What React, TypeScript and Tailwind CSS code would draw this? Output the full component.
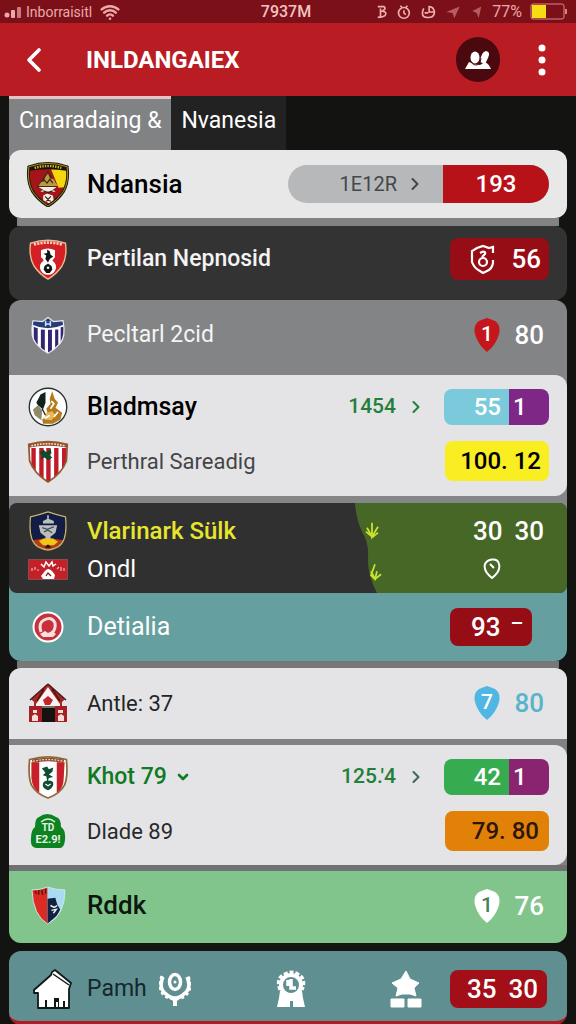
import type { ReactNode } from 'react';
import { ChevronDown, ChevronLeft, ChevronRight, Wifi } from 'lucide-react';

const SHIELD = 'M4 6Q24 -1 44 6Q46 22 40 32Q34 41 24 47Q14 41 8 32Q2 22 4 6Z';

function LionCrest() {
  return (
    <svg viewBox="0 0 48 48" className="h-[46px] w-[46px]" aria-hidden="true">
      <clipPath id="lion">
        <path d={SHIELD} />
      </clipPath>
      <g clipPath="url(#lion)">
        <path d="M0 0h48v48H0z" fill="#a5141a" />
        <path d="M27 8h20v19l-12 1z" fill="#f6d60f" />
        <path d="M24 10L12 28H34Z" fill="#4b2a14" />
        <path d="M0 0h48v11Q24 6 0 11z" fill="#17140c" />
      </g>
      <path d="M10 7Q24 3 38 7" fill="none" stroke="#d8b428" strokeWidth="3" strokeDasharray="1.500 1.200" />
      <path d="M24 13l2 5 4 1 2 4 3 3H14l3-4 3-1 1-4z" fill="#b99a45" />
      <path d="M20 20l3 3 3-4 3 4" fill="none" stroke="#3c1a12" strokeWidth="1.2" />
      <path d="M14 27h19l-4 3 3 2H16l3-2zM19 36l4-2 6 2 1 5-5 3-6-3z" fill="#f3ece2" />
      <path d="M19 31l5 2 5-2M21 37l3 3 3-3M22 42l2-1 3 1" fill="none" stroke="#3c1a12" strokeWidth="1.2" />
      <path d={SHIELD} fill="none" stroke="#1c1a0c" strokeWidth="3" />
      <path d={SHIELD} fill="none" stroke="#b08f22" strokeWidth="1" />
    </svg>
  );
}

function KnotCrest() {
  return (
    <svg viewBox="0 0 48 48" className="h-[42px] w-[42px]" aria-hidden="true">
      <path d={SHIELD} fill="#d41f24" stroke="#e9b98d" strokeWidth="1.6" />
      <path d="M8 7.500Q24 3 40 7.500" fill="none" stroke="#f4cfc7" strokeWidth="3" strokeDasharray="2.500 1.200" />
      <path d="M16 14q8-4 16 0v8q-3 3-3 4 5 3 4 9-2 7-9 7t-9-7q-1-6 4-9 0-2-3-4z" fill="#fff" />
      <path d="M23 13l3 2 1 4 3 2-4 3-2 4-3-4 1-4-3-2 4-1zM20 32l4-3 4 3 1 4-3 4h-4l-3-4z" fill="#141414" />
      <circle cx="24" cy="34" r="1.500" fill="#fff" />
    </svg>
  );
}

function StripedCrest() {
  return (
    <svg viewBox="0 0 48 48" className="h-[38px] w-[38px]" aria-hidden="true">
      <clipPath id="blue">
        <path d="M5 6l12 1 7-5 7 5 12-1q4 20-4 29-7 8-15 12-8-4-15-12Q1 26 5 6z" />
      </clipPath>
      <g clipPath="url(#blue)">
        <path d="M0 0h48v48H0z" fill="#fff" />
        <path d="M6 14h5v34H6zM15 17h5v31h-5zM24 17h5v31h-5zM33 17h4v31h-4zM40 14h4v34h-4z" fill="#322672" />
        <path d="M0 0h48v12Q24 20 0 12z" fill="#263b78" />
        <path d="M4 12Q24 21 44 12" fill="none" stroke="#fff" strokeWidth="2" />
        <path d="M21 6v7M27 6v7M21 10h6" stroke="#cfe0ff" strokeWidth="2" />
      </g>
      <path d="M5 6l12 1 7-5 7 5 12-1q4 20-4 29-7 8-15 12-8-4-15-12Q1 26 5 6z" fill="none" stroke="#e8eaf5" strokeWidth="1.500" />
    </svg>
  );
}

function KnightCrest() {
  return (
    <svg viewBox="0 0 48 48" className="h-10 w-10" aria-hidden="true">
      <circle cx="24" cy="24" r="22.500" fill="#fff" stroke="#26332e" strokeWidth="1.600" />
      <path d="M10 19l5-10 6-3v13l-3 8-6-5z" fill="#10241d" />
      <path d="M6 27l6-5 5 6-1 12-8-6z" fill="#8f8b6a" />
      <path d="M29 5l3 9 4 5-3 6 8 6-2 8-9 5H18l-1-5 7-5-2-8 5-6-1-6z" fill="#b57a1c" />
      <path d="M22 31l7-2 4 5-5 6-8-1z" fill="#e7b95a" />
      <path d="M28 17l3 3-4 6M36 30l-5 6M20 38l6-4" fill="none" stroke="#fff" strokeWidth="2" />
      <path d="M17 26l4 8" stroke="#10241d" strokeWidth="1.500" />
    </svg>
  );
}

function RedStripesCrest() {
  return (
    <svg viewBox="0 0 48 50" className="h-[44px] w-[42px]" aria-hidden="true">
      <clipPath id="stripes">
        <path d="M2 6Q24 0 46 6L45 25Q40 39 24 49Q8 39 3 25Z" />
      </clipPath>
      <g clipPath="url(#stripes)">
        <path d="M0 0h48v50H0z" fill="#fff" />
        <path d="M5 10h5v40H5zM14 10h5v40h-5zM22 10h5v40h-5zM31 10h5v40h-5zM40 10h5v40h-5z" fill="#c11a28" />
        <path d="M0 0h48v10Q24 5 0 10z" fill="#a34a33" />
      </g>
      <path d="M5 7.500Q24 2.500 43 7.500" fill="none" stroke="#efd9b8" strokeWidth="2.500" strokeDasharray="2 1.300" />
      <path d="M14 15l5-3 3 3 5-4 1 5-3 2 4 3-5 3-4-3-4 2 1-4z" fill="#0e4a2b" />
      <path d="M2 6Q24 0 46 6L45 25Q40 39 24 49Q8 39 3 25Z" fill="none" stroke="#8d5a32" strokeWidth="2" />
    </svg>
  );
}

function TrophyCrest() {
  return (
    <svg viewBox="0 0 48 48" className="h-10 w-10" aria-hidden="true">
      <clipPath id="trophy">
        <path d="M24 1Q36 5 45 7Q48 36 36 43Q30 46 24 47Q18 46 12 43Q0 36 3 7Q12 5 24 1Z" />
      </clipPath>
      <g clipPath="url(#trophy)">
        <path d="M0 0h48v48H0z" fill="#131c45" />
        <path d="M0 36l24-4 24 4v12H0z" fill="#b23a1c" />
      </g>
      <path d="M23 5h2v6h-2zM18 12l6-3 7 3v3H18zM13 17h22l-2 9-6 5v3h-6v-3l-6-5z" fill="#b7bfc0" />
      <path d="M17 20l6 2 8-3M19 25l5-2 5 3" fill="none" stroke="#45504f" strokeWidth="1.500" />
      <path d="M13 36l6-3h11l6 4-5 4H18z" fill="#f2c614" />
      <path d="M20 44l4-4 4 4" fill="#1c120c" />
      <path d="M24 1Q36 5 45 7Q48 36 36 43Q30 46 24 47Q18 46 12 43Q0 36 3 7Q12 5 24 1Z" fill="none" stroke="#c6b46a" strokeWidth="1.500" />
    </svg>
  );
}

function BannerCrest() {
  return (
    <svg viewBox="0 0 40 21" className="h-[21px] w-10" aria-hidden="true">
      <path d="M.5.500h39v20H.5z" fill="#c3202a" stroke="#8c4c4a" />
      <path d="M4 9v3M7 8v3M9 11h2M29 10l2-2M33 8v4M36 9v3" stroke="#f2b7b2" strokeWidth="1.200" />
      <path d="M13 5l3 3 2-5 3 4 3-4 1 4 3-2" fill="none" stroke="#fff" strokeWidth="1.500" />
      <path d="M17 12q3-4 7 0l3 4-1 4H15l-2-3z" fill="#fff" />
      <path d="M18 17l2-3 3 3" fill="none" stroke="#7a1016" strokeWidth="1.200" />
    </svg>
  );
}

function RoundCrest() {
  return (
    <svg viewBox="0 0 32 32" className="h-8 w-8" aria-hidden="true">
      <circle cx="16" cy="16" r="14.500" fill="#c8303b" stroke="#fff" strokeWidth="2" />
      <path d="M9 21q-3-9 3-12 8-4 11 3 1 6-3 10" fill="none" stroke="#f7dfe0" strokeWidth="3" />
      <path d="M16 11q4 0 3 4l-2 3v3h-3v-3q-3-6 2-7z" fill="#c8303b" />
      <path d="M8 23l5-3 3 2 4-2 4 3-3 3H11z" fill="#f7dfe0" />
    </svg>
  );
}

function StadiumCrest() {
  return (
    <svg viewBox="0 0 40 40" className="h-10 w-10" aria-hidden="true">
      <path d="M20 1L37 16l-3 3v6H6v-6l-3-3z" fill="#a8262a" />
      <path d="M20 1L2 17M16 6L9 18M24 6l8 12M20 1l18 16" stroke="#4d1717" strokeWidth="1.500" />
      <path d="M20 4l12 17v6H8v-6z" fill="#f8f3f0" />
      <path d="M15 17l5-4 5 4-3 5h-5z" fill="#c2242b" />
      <path d="M1 23h13v16H1zM27 23h12v16H27z" fill="#a32025" />
      <path d="M5 27h4v3H5zM4 33l3-2 3 2v5H4zM30 27h5v3h-5zM30 33l3-2 3 2v5h-6z" fill="#f7dcd8" />
      <path d="M14 24h13v15H14z" fill="#16120f" />
      <path d="M14 24h13" stroke="#6b716b" strokeWidth="2" />
    </svg>
  );
}

function LeafCrest() {
  return (
    <svg viewBox="0 0 48 50" className="h-[44px] w-[42px]" aria-hidden="true">
      <path d="M3 5Q24-1 45 5Q47 24 43 34Q38 44 24 49Q10 44 5 34Q1 24 3 5Z" fill="#fff" stroke="#8f6a36" strokeWidth="2" />
      <path d="M5 8h9v35Q6 38 5 26zM34 8h9l-1 18q0 12-8 17z" fill="#c8202b" />
      <path d="M6 7Q24 3 42 7" fill="none" stroke="#8d4b36" strokeWidth="4" />
      <path d="M7 7Q24 3 41 7" fill="none" stroke="#ead2ac" strokeWidth="1.500" strokeDasharray="2 1.500" />
      <path d="M17 15l6-2 2 3 5-2-1 5-4 3 5 3-5 1-1 3q7 0 6 5-2 5-6 6-6-2-6-6 0-4 5-5l-1-5-4-1 3-3z" fill="#0f4d35" />
      <path d="M21 33l3 2 3-2" fill="none" stroke="#fff" strokeWidth="1.300" />
    </svg>
  );
}

function GreenBadge() {
  return (
    <svg viewBox="0 0 36 36" className="h-9 w-9" aria-hidden="true">
      <path d="M9 4q8-6 17 0 5 1 5 10 5 3 4 13-1 8-5 8H6q-6-1-5-10 0-8 4-11 0-9 4-10z" fill="#0d8221" />
      <path d="M11 9q7-6 14 0" fill="none" stroke="#d9f3da" strokeWidth="1.500" />
      <text x="18" y="18" textAnchor="middle" fontSize="10" fontWeight="700" fill="#e6f7e6">TD</text>
      <text x="18" y="30" textAnchor="middle" fontSize="11" fontWeight="700" fill="#e6f7e6">E2.9!</text>
    </svg>
  );
}

function HalfCrest() {
  return (
    <svg viewBox="0 0 36 40" className="h-[39px] w-[35px]" aria-hidden="true">
      <path d="M1 4Q10 4 17 1v38Q2 30 1 4z" fill="#dc2a25" />
      <path d="M17 1q8 3 18 3 0 26-18 35z" fill="#a9dcf2" />
      <path d="M17 13l8-1 2 7 3 5-3 6-10 9z" fill="#14213f" />
      <path d="M20 20l4 2 3-2M21 25l5-1-3 4" fill="none" stroke="#e9f2fa" strokeWidth="1.500" />
      <path d="M4 5l2 3M8 4v5M11 4l1 5M15 3v5" stroke="#5d1512" strokeWidth="1.500" />
      <path d="M1 4Q10 4 17 1q8 3 18 3 0 26-18 35Q2 30 1 4z" fill="none" stroke="#cfe6e6" />
    </svg>
  );
}

function HouseIcon() {
  return (
    <svg viewBox="0 0 40 40" className="h-10 w-10" aria-hidden="true">
      <path d="M18 6L1 21v3h4v15h31V20l2-6L22 1l-3 2z" fill="#fff" stroke="#10191a" strokeWidth="1.800" strokeLinejoin="round" />
      <path d="M20 5l16 11" stroke="#10191a" strokeWidth="1.500" />
      <path d="M12 31h2v8h-2zM21 29h5v9h-5zM30 32h2v7h-2z" fill="#10191a" />
      <path d="M23 33h2v5h-2z" fill="#fff" />
    </svg>
  );
}

function WreathIcon() {
  return (
    <svg viewBox="0 0 32 36" className="h-9 w-8" fill="none" stroke="#fff" aria-hidden="true">
      <path d="M4 6Q-1 17 7 23Q11 27 16 27Q21 27 25 23Q33 17 28 6" strokeWidth="3.500" />
      <path d="M3 5Q-2 18 6 25Q16 31 26 25Q34 18 29 5" strokeWidth="3" strokeDasharray="3 2.500" />
      <ellipse cx="16" cy="11" rx="5.500" ry="7.500" strokeWidth="3.500" />
      <circle cx="16" cy="11" r="1.500" fill="#fff" stroke="none" />
      <path d="M11 26l3 4v5h4v-5l3-4z" fill="#fff" stroke="none" />
    </svg>
  );
}

function MedalIcon() {
  return (
    <svg viewBox="0 0 30 38" className="h-[38px] w-[30px]" fill="none" stroke="#fff" aria-hidden="true">
      <path d="M4 20Q-1 8 9 4Q15 0 22 4Q31 9 26 20" strokeWidth="3" strokeDasharray="4 2" />
      <circle cx="15" cy="15" r="10" strokeWidth="4" />
      <path d="M15 9v9h5M12 10v6" strokeWidth="3.500" />
      <path d="M4 21h5l6 4 6-4h5l1 7 2 9H17v-6h-3v6H1l2-9z" fill="#fff" stroke="none" />
    </svg>
  );
}

function PodiumIcon() {
  return (
    <svg viewBox="0 0 32 38" className="h-[38px] w-8" fill="#fff" stroke="#fff" strokeLinejoin="round" aria-hidden="true">
      <path d="M16 1l4 8 9 4-5 5 2 8-6-2h-8l-6 2 2-8-6-5 9-4z" />
      <path d="M1 29h13v8H1zM18 29h13v8H18z" />
    </svg>
  );
}

function Pin({ value, fill, ink }: { value: string; fill: string; ink: string }) {
  return (
    <svg viewBox="0 0 26 36" className="h-9 w-[26px]" role="img" aria-label={value}>
      <path d="M13 1Q16 2 21 4Q27 8 25 17Q22 28 13 35Q4 28 1 17Q-1 8 5 4Q10 2 13 1Z" fill={fill} />
      <text x="13" y="24" textAnchor="middle" fontSize="21" fontWeight="500" fill={ink}>{value}</text>
    </svg>
  );
}

type RowProps = { logo: ReactNode; name: ReactNode; tone: string; children?: ReactNode };

function Row({ logo, name, tone, children }: RowProps) {
  return (
    <div className="flex items-center gap-4 pr-[18px] pl-4">
      <span className="grid w-[46px] shrink-0 place-items-center">{logo}</span>
      <span className={`flex flex-1 items-center gap-2 whitespace-nowrap ${tone}`}>{name}</span>
      {children}
    </div>
  );
}

function Meta({ children, chevron }: { children: ReactNode; chevron: string }) {
  return (
    <button className="flex items-center gap-[10px] pr-[2px] text-[21px] font-medium text-[#23803a]">
      {children}
      <ChevronRight className={`h-5 w-5 ${chevron}`} strokeWidth={2.5} />
    </button>
  );
}

function Split({ left, right, leftTone, rightTone }: { left: string; right: string; leftTone: string; rightTone: string }) {
  return (
    <span className="flex h-9 w-[105px] overflow-hidden rounded-lg text-2xl leading-9 font-medium text-white">
      <span className={`flex-1 pr-2 text-right ${leftTone}`}>{left}</span>
      <span className={`w-10 pl-1 ${rightTone}`}>{right}</span>
    </span>
  );
}

const score = 'text-[26px] leading-9 font-medium';

function StatusBar() {
  return (
    <div className="grid h-[23px] grid-cols-[1fr_auto_1fr] items-center bg-[#7b1018] pr-2 pl-1 text-base leading-5 text-[#eba9aa]">
      <div className="flex items-center">
        <svg viewBox="0 0 18 12" className="mr-1 h-3 w-[18px]" fill="currentColor" aria-hidden="true">
          <circle cx="3" cy="9" r="2.500" />
          <rect x="7" y="4" width="4" height="8" rx="1" />
          <rect x="13" y="1" width="4" height="11" rx="1" opacity=".7" />
        </svg>
        <span className="text-sm">Inborraisitl</span>
        <Wifi className="ml-2 h-5 w-5" strokeWidth={3} />
      </div>
      <span className="font-medium text-[#f3c3c3]">7937M</span>
      <div className="flex items-center justify-end gap-2">
        <svg viewBox="0 0 120 18" className="h-[18px] w-[108px]" fill="none" stroke="#f0b2b1" strokeWidth="1.800" aria-hidden="true">
          <path d="M2 3h7q3 2-2 5 6 1 3 5-3 2-8 2M5 5v10" />
          <circle cx="31" cy="10" r="6" />
          <path d="M31 7v3l2 2M27 2l2 2M35 2l-2 2" />
          <path d="M53 5q-4 9 3 10 9 1 9-6-1-6-6-6v6h5M54 10h4" />
          <path d="M78 9l15-6-6 13-2-6zM107 8l10-5-3 13-2-6z" fill="#b85b5f" stroke="none" />
        </svg>
        <span>77%</span>
        <svg viewBox="0 0 38 17" className="h-[17px] w-[38px]" aria-hidden="true">
          <rect x="1" y="1" width="33" height="15" rx="2" fill="none" stroke="#d48a84" />
          <rect x="2" y="2" width="14" height="13" fill="#f5dc15" />
          <path d="M36 6v5" stroke="#d48a84" strokeWidth="2" />
        </svg>
      </div>
    </div>
  );
}

function Header() {
  return (
    <header className="flex items-center bg-[#b91c23] py-[14px] pr-4 pl-3 text-white">
      <button aria-label="Back" className="grid h-11 w-11 place-items-center">
        <ChevronLeft className="h-11 w-10" strokeWidth={2.2} />
      </button>
      <h1 className="ml-[30px] flex-1 text-2xl leading-8 font-bold">INLDANGAIEX</h1>
      <button aria-label="Friends" className="grid h-[45px] w-[44px] place-items-center rounded-full bg-[#4a090e]">
        <svg viewBox="0 0 26 20" className="h-5 w-[26px]" fill="#fff" aria-hidden="true">
          <path d="M0 19l4-7 5 2 6 1 5-3q4 2 6 7z" />
          <ellipse cx="10" cy="7.500" rx="4.500" ry="6" />
          <path d="M15 12q1-10 6-11 5 1 2 7l-3 6z" />
          <path d="M5 11q5 7 10 2l1-5" fill="none" stroke="#4a090e" />
        </svg>
      </button>
      <button aria-label="More" className="ml-6 grid h-11 w-9 place-items-center">
        <svg viewBox="0 0 8 32" className="h-8 w-2" fill="#fff" aria-hidden="true">
          <circle cx="4" cy="4" r="3.500" />
          <circle cx="4" cy="16" r="3.500" />
          <circle cx="4" cy="28" r="3.500" />
        </svg>
      </button>
    </header>
  );
}

export default function App() {
  return (
    <div className="min-h-screen bg-[#131312] font-[Roboto,'Liberation_Sans',sans-serif]">
      <StatusBar />
      <Header />

      <main className="px-[9px]">
        <nav className="-mb-2 flex text-[23px] leading-8 text-white">
          <button className="border-t-[3px] border-[#e4c4c4] bg-[#808284] px-[10px] pt-[6px] pb-[21px] whitespace-nowrap">Cınaradaing &amp;</button>
          <button className="bg-[#222222] px-[10px] pt-[9px] pb-[21px]">Nvanesia</button>
        </nav>

        <section className="relative rounded-xl bg-[#e8e8e9] py-[11px]">
          <Row logo={<LionCrest />} name="Ndansia" tone="text-[26px] font-medium text-black">
            <div className="flex h-[38px] w-[261px] items-center rounded-full bg-[#b7b8ba]">
              <button className="flex flex-1 items-center justify-end gap-2 pr-[18px] text-xl text-[#45474a]">
                1E12R
                <ChevronRight className="h-5 w-5" strokeWidth={2.5} />
              </button>
              <span className="h-full w-[106px] rounded-l-lg rounded-r-full bg-[#b81219] text-center text-2xl leading-[38px] font-medium text-white">193</span>
            </div>
          </Row>
        </section>
        <div className="mx-2 h-2 bg-[#828385]" />

        <section className="rounded-xl bg-[#343334] pt-3 pb-5">
          <Row logo={<KnotCrest />} name="Pertilan Nepnosid" tone="text-[23px] font-medium text-[#f4f4f4]">
            <span className={`flex h-[42px] w-[99px] items-center justify-between rounded-lg bg-[#970d16] pr-2 pl-5 text-white ${score}`}>
              <svg viewBox="0 0 26 30" className="h-[30px] w-[26px]" fill="none" stroke="#fff" strokeWidth="2.200" aria-hidden="true">
                <path d="M23 9V3l-4 1-6-2-6 2-5 3v11q2 6 8 9l3 2 4-2q5-2 6-8v-3" />
                <circle cx="13" cy="18" r="4" />
                <path d="M10 9q6-3 5 1l-3 3" />
              </svg>
              56
            </span>
          </Row>
        </section>

        <section className="rounded-t-xl bg-[#828486] pt-4 pb-[21px]">
          <Row logo={<StripedCrest />} name="Pecltarl 2cid" tone="text-[23px] text-[#f4f4f4]">
            <span className={`flex items-center gap-[14px] pr-[5px] text-white ${score}`}>
              <Pin value="1" fill="#c4161c" ink="#fff" />
              80
            </span>
          </Row>
        </section>

        <div className="bg-[#858687] pb-[7px]">
          <section className="space-y-3 rounded-r-xl bg-[#e4e4e6] pt-3 pb-[13px]">
            <Row logo={<KnightCrest />} name="Bladmsay" tone="text-[25px] leading-9 font-medium text-black">
              <Meta chevron="text-[#23803a]">1454</Meta>
              <Split left="55" right="1" leftTone="bg-[#7bcadc]" rightTone="bg-[#7f2786]" />
            </Row>
            <Row logo={<RedStripesCrest />} name="Perthral Sareadig" tone="text-[22px] text-[#444448]">
              <span className="h-10 w-[104px] rounded-lg bg-[#f8ee22] pr-2 text-right text-2xl leading-10 font-medium text-black">100. 12</span>
            </Row>
          </section>
        </div>

        <div className="bg-linear-to-b from-[#858687] to-[#659d9e]">
          <section className="relative overflow-hidden rounded-lg bg-[#303031] pt-2 pb-[6px]">
            <svg viewBox="0 0 212 91" preserveAspectRatio="none" className="absolute inset-y-0 right-0 h-full w-[212px]" aria-hidden="true">
              <path d="M0 0Q1 16 7 29Q14 40 13 55Q12 72 22 91H212V0Z" fill="#466725" />
              <g fill="none" stroke="#c6e32e" strokeWidth="1.800">
                <path d="M12 25l5 9M17 20l0 14 6-10M11 29l6 5M17 35l6-5" />
                <path d="M20 62l-4 11 4 4 2-8M16 69l4 8 6-5" />
              </g>
            </svg>
            <div className="relative">
              <Row logo={<TrophyCrest />} name="Vlarinark Sülk" tone="text-2xl font-medium text-[#e8e52e]">
                <span className={`flex gap-3 pr-[5px] text-white ${score}`}>
                  <span>30</span>
                  <span>30</span>
                </span>
              </Row>
              <Row logo={<BannerCrest />} name="Ondl" tone="text-2xl leading-9 text-white">
                <svg viewBox="0 0 18 22" className="mr-12 h-[22px] w-[18px]" fill="none" stroke="#fff" strokeWidth="2" aria-hidden="true">
                  <path d="M9 1.500Q15 1 16 6Q18 13 9 20Q0 13 2 6Q4 2 9 1.500ZM7 6l4 4" />
                </svg>
              </Row>
            </div>
          </section>
        </div>

        <section className="rounded-b-xl bg-[#659fa0] pt-[15px] pb-[15px]">
          <Row logo={<RoundCrest />} name="Detialia" tone="text-[25px] leading-9 text-white">
            <span className={`mr-[17px] flex h-[38px] w-[82px] items-center gap-[10px] rounded-lg bg-[#970d16] pl-[21px] text-white ${score}`}>
              93
              <span className="-mt-2 text-xl">–</span>
            </span>
          </Row>
        </section>
        <div className="mx-2 h-[7px] bg-[#777777]" />

        <div className="rounded-t-xl bg-[#818182]">
          <section className="rounded-t-xl bg-[#e4e4e6] pt-[15px] pb-4">
            <Row logo={<StadiumCrest />} name="Antle: 37" tone="text-[22px] text-[#252527]">
              <span className={`flex items-center gap-[14px] pr-[5px] text-[#58b4c8] ${score}`}>
                <Pin value="7" fill="#50b6e4" ink="#fff" />
                80
              </span>
            </Row>
          </section>

          <section className="mt-[6px] rounded-r-xl bg-[#e4e4e6] pt-[10px] pb-[14px]">
            <Row
              logo={<LeafCrest />}
              name={<>Khot 79 <ChevronDown className="h-4 w-4" strokeWidth={4} /></>}
              tone="text-[23px] font-medium text-[#107a24]"
            >
              <Meta chevron="text-[#3d6a57]">125.&apos;4</Meta>
              <Split left="42" right="1" leftTone="bg-[#37ab50]" rightTone="bg-[#8b2470]" />
            </Row>
            <div className="mt-3">
              <Row logo={<GreenBadge />} name="Dlade 89" tone="text-[22px] text-[#29292c]">
                <span className="h-10 w-[104px] rounded-lg bg-[#e18108] pr-[10px] text-right text-2xl leading-10 font-medium text-[#2b1608]">79. 80</span>
              </Row>
            </div>
          </section>
          <div className="h-[6px] bg-[#717171]" />
        </div>

        <section className="rounded-b-xl bg-[#81c58d] pt-[15px] pb-[18px]">
          <Row logo={<HalfCrest />} name="Rddk" tone="text-[26px] font-medium text-[#0c170d]">
            <span className={`flex items-center gap-[14px] pr-[5px] text-white ${score}`}>
              <Pin value="1" fill="#fff" ink="#48805a" />
              76
            </span>
          </Row>
        </section>

        <footer className="mt-2 rounded-xl border-b-4 border-[#b01c24] bg-[#5f8f91] pt-[18px] pb-3">
          <div className="flex items-center gap-3 pr-5 pl-6">
            <button aria-label="Home"><HouseIcon /></button>
            <span className="w-[62px] pl-[2px] text-[23px]  text-[#15262e]">Pamh</span>
            <nav className="flex flex-1 items-center justify-between pr-4">
              <button aria-label="Honours"><WreathIcon /></button>
              <button aria-label="Medals"><MedalIcon /></button>
              <button aria-label="Ranking"><PodiumIcon /></button>
            </nav>
            <span className={`flex h-[38px] w-[97px] items-center justify-center gap-3 rounded-lg bg-[#a20f18] pl-2 text-white ${score}`}>
              <span>35</span>
              <span>30</span>
            </span>
          </div>
        </footer>
      </main>
    </div>
  );
}
